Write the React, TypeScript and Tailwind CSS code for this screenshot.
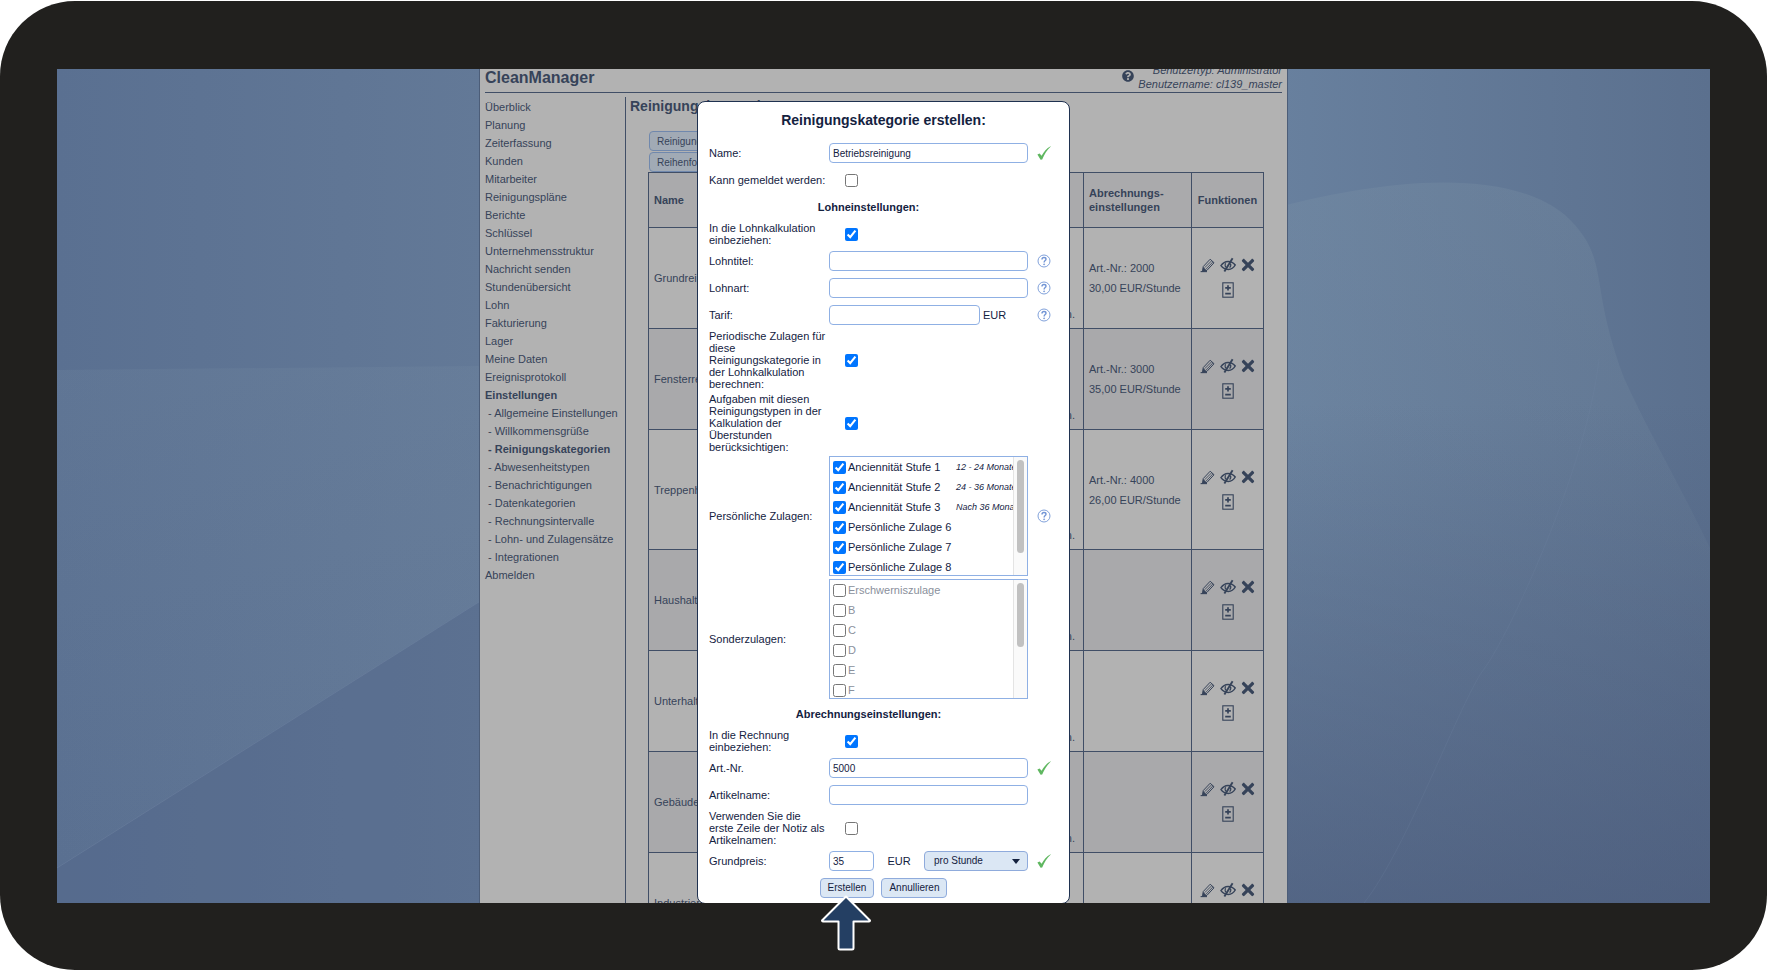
import React, { useState } from "react";
import { FaQuestionCircle, FaTimes } from "react-icons/fa";

const NAV_ITEMS = [
  "Überblick",
  "Planung",
  "Zeiterfassung",
  "Kunden",
  "Mitarbeiter",
  "Reinigungspläne",
  "Berichte",
  "Schlüssel",
  "Unternehmensstruktur",
  "Nachricht senden",
  "Stundenübersicht",
  "Lohn",
  "Fakturierung",
  "Lager",
  "Meine Daten",
  "Ereignisprotokoll",
];

const SETTINGS_ITEMS = [
  "Allgemeine Einstellungen",
  "Willkommensgrüße",
  "Reinigungskategorien",
  "Abwesenheitstypen",
  "Benachrichtigungen",
  "Datenkategorien",
  "Rechnungsintervalle",
  "Lohn- und Zulagensätze",
  "Integrationen",
];

interface Category {
  name: string;
  artNr?: string;
  price?: string;
  tall?: boolean;
}

const CATEGORIES: Category[] = [
  { name: "Grundreinigung", artNr: "2000", price: "30,00" },
  { name: "Fensterreinigung", artNr: "3000", price: "35,00" },
  { name: "Treppenhausreinigung", artNr: "4000", price: "26,00", tall: true },
  { name: "Haushaltsreinigung" },
  { name: "Unterhaltsreinigung" },
  { name: "Gebäudereinigung" },
  { name: "Industriereinigung" },
];

interface Allowance {
  name: string;
  note?: string;
}

const PERSONAL_ALLOWANCES: Allowance[] = [
  { name: "Anciennität Stufe 1", note: "12 - 24 Monate" },
  { name: "Anciennität Stufe 2", note: "24 - 36 Monate" },
  { name: "Anciennität Stufe 3", note: "Nach 36 Monaten" },
  { name: "Persönliche Zulage 6" },
  { name: "Persönliche Zulage 7" },
  { name: "Persönliche Zulage 8" },
];

const SPECIAL_ALLOWANCES: Allowance[] = [
  { name: "Erschwerniszulage" },
  { name: "B" },
  { name: "C" },
  { name: "D" },
  { name: "E" },
  { name: "F" },
];

/* Icons */

const PencilIcon = () => (
  <svg viewBox="0 0 16 16" className="h-4 w-4" fill="none" stroke="currentColor">
    <path d="M3.2 9.6 10.2 2.2 14 5.8 7 13.3 2.6 14.2Z" strokeWidth="1" />
    <path d="M4.8 10.6 11.6 3.8M6.2 12 13 4.8" strokeWidth="0.8" />
    <path d="M3.2 10 6.8 13.4 2.2 14.6Z" fill="currentColor" stroke="none" />
    <path d="M0.6 14.6H7" strokeWidth="1.1" />
  </svg>
);

const EyeSlashIcon = () => (
  <svg viewBox="0 0 16 16" className="h-4 w-4" fill="none" stroke="currentColor">
    <path d="M1 8.6C2.8 5.8 5.2 4.4 8 4.4S13.4 5.6 15.2 8C13.6 11 11 12.4 8.2 12.4S2.8 11.2 1 8.6Z" strokeWidth="1.5" />
    <path d="M5.6 6.2C4.8 8 5.2 9.8 6.6 10.6M10.4 6.4C11.2 8 10.6 9.6 9.6 10.6" strokeWidth="1.2" />
    <path d="M12.6 1.2 4.4 14.6" strokeWidth="1.9" />
  </svg>
);

const PlusMinusIcon = () => (
  <svg viewBox="0 0 12 16" className="h-4 w-3" fill="none" stroke="currentColor">
    <rect x="0.8" y="0.8" width="10.4" height="14.4" strokeWidth="1.1" />
    <path d="M6 3.2V8.4M3.2 5.8H8.8M3.2 11.6H8.8" strokeWidth="1.7" />
  </svg>
);

const CheckIcon = () => (
  <svg viewBox="0 0 14 14" className="h-3.5 w-3.5" fill="#5fb760">
    <path d="M0.4 8.4 2.6 7.4 4.6 9.8C6.8 5.8 9.6 2.4 13.6 0.2L13.8 0.6C10 4.2 7.4 8.2 5.2 13.6L3.6 13.8Z" />
  </svg>
);

const HintIcon = () => (
  <svg viewBox="0 0 14 14" className="h-3.5 w-3.5" fill="none" stroke="#7396d6">
    <circle cx="7" cy="7" r="6" strokeWidth="0.9" />
    <path d="M5 5.4C5 4.1 5.9 3.5 7 3.5S9 4.2 9 5.2C9 6.6 7.1 6.6 7.1 8.4" strokeWidth="1.4" />
    <circle cx="7.1" cy="10.3" r="0.5" strokeWidth="0.8" fill="#7396d6" />
  </svg>
);

const PointerArrow = () => (
  <svg viewBox="0 0 52 57" className="absolute bottom-5 left-1/2 z-20 -ml-16 h-[57px] w-[52px]">
    <path
      d="M26 2.5 50 26.5Q50 27.5 49 27.5H33.5V54Q33.5 55.5 32 55.5H20Q18.5 55.5 18.5 54V27.5H3Q2 27.5 2 26.5Z"
      fill="#243f63"
      stroke="#fff"
      strokeWidth="2"
      strokeLinejoin="round"
    />
  </svg>
);

const Wallpaper = () => (
  <svg viewBox="0 0 1653 834" preserveAspectRatio="none" className="absolute inset-0 h-full w-full">
    <defs>
      <linearGradient id="sky" x1="0" y1="0" x2="1" y2="0">
        <stop offset="0" stopColor="#5a7091" />
        <stop offset="0.26" stopColor="#637997" />
        <stop offset="0.74" stopColor="#68809e" />
        <stop offset="1" stopColor="#5b708e" />
      </linearGradient>
      <linearGradient id="dusk" x1="0" y1="0" x2="0" y2="1">
        <stop offset="0.4" stopColor="#4a5a7a" stopOpacity="0" />
        <stop offset="1" stopColor="#4a5a7a" stopOpacity="0.7" />
      </linearGradient>
      <linearGradient id="haze" x1="0" y1="0" x2="0" y2="1">
        <stop offset="0" stopColor="#8096a8" stopOpacity="0.25" />
        <stop offset="1" stopColor="#8096a8" stopOpacity="0" />
      </linearGradient>
      <linearGradient id="band" x1="0" y1="0" x2="0" y2="1">
        <stop offset="0" stopColor="#7d93a8" stopOpacity="0.16" />
        <stop offset="1" stopColor="#7d93a8" stopOpacity="0" />
      </linearGradient>
    </defs>
    <rect width="1653" height="834" fill="url(#sky)" />
    <path d="M0 301 422 297V533L0 799Z" fill="url(#band)" />
    <path d="M1200 144C1290 118 1440 90 1508 146C1555 190 1530 210 1567 309C1590 360 1625 420 1653 479V834H1200Z" fill="url(#haze)" />
    <rect x="826" width="827" height="834" fill="url(#dusk)" />
    <path d="M0 799 422 533V834H0Z" fill="#4f6186" fillOpacity="0.32" />
    <path d="M0 799 422 533" stroke="#7488a6" strokeOpacity="0.4" />
    <path d="M1542 290C1530 400 1450 570 1427 600S1350 780 1307 834" fill="none" stroke="#7488a6" strokeOpacity="0.2" />
  </svg>
);

/* Page behind the dialog */

const NavLink: React.FC<{ active?: boolean; children: React.ReactNode }> = ({ active = false, children }) => (
  <a href="#" className={active ? "block font-bold" : "block"}>
    {children}
  </a>
);

const Sidebar = () => (
  <nav className="w-[141px] shrink-0 border-r border-[#404e66] pt-px leading-[18px]">
    {NAV_ITEMS.map((item) => (
      <NavLink key={item}>{item}</NavLink>
    ))}
    <NavLink active>Einstellungen</NavLink>
    <div className="pl-[3px]">
      {SETTINGS_ITEMS.map((item) => (
        <NavLink key={item} active={item === "Reinigungskategorien"}>
          - {item}
        </NavLink>
      ))}
    </div>
    <NavLink>Abmelden</NavLink>
  </nav>
);

const cell = "border border-[#404e66]";

const CategoryTable = () => (
  <div className="px-[18px]">
    <table className="w-full table-fixed border-collapse text-left">
      <colgroup>
        <col />
        <col className="w-[120px]" />
        <col className="w-[108px]" />
        <col className="w-[72px]" />
      </colgroup>
      <thead>
        <tr className="h-[55px] bg-[#aaaaac] leading-3.5">
          <th className={`${cell} border-r-0 pl-[5px]`}>Name</th>
          <th className={`${cell} border-l-0`} />
          <th className={`${cell} pl-[5px]`}>
            Abrechnungs-
            <br />
            einstellungen
          </th>
          <th className={`${cell} text-center`}>Funktionen</th>
        </tr>
      </thead>
      <tbody className="leading-5">
        {CATEGORIES.map((category) => (
          <tr
            key={category.name}
            className={`${category.tall ? "h-[120px]" : "h-[101px]"} even:bg-[#a9a9ab]`}
          >
            <td className={`${cell} border-r-0 pl-[5px]`}>{category.name}</td>
            <td className={`${cell} border-l-0 pr-2 pb-1 text-right align-bottom`}>n.</td>
            <td className={`${cell} pl-[5px]`}>
              {category.artNr && (
                <>
                  <div>Art.-Nr.: {category.artNr}</div>
                  <div>{category.price} EUR/Stunde</div>
                </>
              )}
            </td>
            <td className={cell}>
              <div className="flex flex-col items-center gap-2 pb-0.5">
                <div className="flex items-center gap-1">
                  <button type="button" aria-label="Bearbeiten">
                    <PencilIcon />
                  </button>
                  <button type="button" aria-label="Ausblenden">
                    <EyeSlashIcon />
                  </button>
                  <button type="button" aria-label="Löschen">
                    <FaTimes className="h-[18px] w-4" />
                  </button>
                </div>
                <button type="button" aria-label="Zulagen">
                  <PlusMinusIcon />
                </button>
              </div>
            </td>
          </tr>
        ))}
      </tbody>
    </table>
  </div>
);

const AppPage = () => (
  <div className="relative mx-auto flex h-full w-[809px] flex-col border-x border-[#4c5d78] bg-[#b2b2b2] px-[5px] text-[11px] text-[#364359]">
    <header className="flex h-6 shrink-0 items-end justify-between border-b border-[#404e66]">
      <h1 className="text-base leading-7 font-bold">CleanManager</h1>
      <div className="flex items-end gap-1">
        <FaQuestionCircle className="mb-2.5 h-3 w-3" />
        <div className="pb-px text-right leading-3.5 italic">
          <div>Benutzertyp: Administrator</div>
          <div>Benutzername: cl139_master</div>
        </div>
      </div>
    </header>
    <div className="mt-1 flex min-h-0 flex-1">
      <Sidebar />
      <main className="min-w-0 flex-1 overflow-hidden pl-1">
        <h2 className="text-sm leading-[18px] font-bold">Reinigungskategorien</h2>
        <div className="mt-4 ml-[19px] flex flex-col items-start gap-px text-[10px]">
          <button type="button" className="h-5 rounded border border-[#7088ad] bg-[#a1aab5] px-[7px]">
            Reinigungskategorie
          </button>
          <button type="button" className="h-5 rounded border border-[#7088ad] bg-[#a1aab5] px-[7px]">
            Reihenfolge ändern
          </button>
        </div>
        <CategoryTable />
      </main>
    </div>
  </div>
);

/* Dialog */

const inputClass = "h-5 rounded border border-[#8fb0e4] bg-white pl-[3px] text-[10px] outline-none";
const buttonClass = "h-5 rounded border border-[#8fabdc] bg-[#dbe7f4] px-[7px] text-[10px]";

const Row: React.FC<{
  label: string;
  id?: string;
  status?: React.ReactNode;
  children: React.ReactNode;
}> = ({ label, id, status, children }) => (
  <div className="grid min-h-6 grid-cols-[120px_199px_1fr] items-center">
    <label htmlFor={id} className="pr-0.5">
      {label}
    </label>
    <div className="flex items-center">{children}</div>
    <div className="pl-[9px]">{status}</div>
  </div>
);

const CheckRow: React.FC<{ label: string; id: string; checked?: boolean }> = ({
  label,
  id,
  checked = false,
}) => (
  <Row label={label} id={id}>
    <input id={id} type="checkbox" defaultChecked={checked} className="ml-4 h-[13px] w-[13px]" />
  </Row>
);

const SectionTitle: React.FC<{ children: React.ReactNode }> = ({ children }) => (
  <h3 className="w-[319px] text-center leading-6 font-bold">{children}</h3>
);

const AllowanceList: React.FC<{
  label: string;
  items: Allowance[];
  checked?: boolean;
  thumb: string;
}> = ({ label, items, checked = false, thumb }) => (
  <div className="flex h-[120px] w-full border border-[#8fb0e4]">
    <ul aria-label={label} className="min-w-0 flex-1 overflow-hidden">
      {items.map((item) => (
        <li key={item.name} className="flex h-5 items-center pl-[3px]">
          <label className={checked ? "flex items-center gap-0.5" : "flex items-center gap-0.5 text-[#8a909c]"}>
            <input type="checkbox" defaultChecked={checked} className="h-[13px] w-[13px]" />
            <span className="w-[106px] whitespace-nowrap">{item.name}</span>
            {item.note && <span className="text-[9px] whitespace-nowrap italic">{item.note}</span>}
          </label>
        </li>
      ))}
    </ul>
    <div className="w-3.5 border-l border-[#e4e4e4] bg-[#fafafa] px-[3px] pt-[3px]">
      <div className={`${thumb} rounded-full bg-[#c1c1c1]`} />
    </div>
  </div>
);

const CategoryDialog = () => {
  const [name, setName] = useState("Betriebsreinigung");
  const [artNr, setArtNr] = useState("5000");
  const [price, setPrice] = useState("35");

  return (
    <div className="absolute inset-x-0 top-8 flex justify-center">
      <form
        role="dialog"
        aria-labelledby="dialog-title"
        className="w-[373px] rounded-lg border border-[#1f3150] bg-white px-[11px] pt-1.5 pb-[3px] text-[11px] leading-3 text-[#14223f]"
      >
        <h2 id="dialog-title" className="mb-[9px] text-center text-sm leading-6 font-bold">
          Reinigungskategorie erstellen:
        </h2>
        <div className="flex flex-col gap-[3px]">
          <Row label="Name:" id="name" status={<CheckIcon />}>
            <input id="name" value={name} onChange={(e) => setName(e.target.value)} className={`${inputClass} w-full`} />
          </Row>
          <CheckRow label="Kann gemeldet werden:" id="reportable" />

          <SectionTitle>Lohneinstellungen:</SectionTitle>
          <CheckRow label="In die Lohnkalkulation einbeziehen:" id="in-payroll" checked />
          <Row label="Lohntitel:" id="wage-title" status={<HintIcon />}>
            <input id="wage-title" className={`${inputClass} w-full`} />
          </Row>
          <Row label="Lohnart:" id="wage-type" status={<HintIcon />}>
            <input id="wage-type" className={`${inputClass} w-full`} />
          </Row>
          <Row label="Tarif:" id="rate" status={<HintIcon />}>
            <input id="rate" className={`${inputClass} mr-[3px] w-[151px]`} />
            EUR
          </Row>
          <CheckRow
            label="Periodische Zulagen für diese Reinigungskategorie in der Lohnkalkulation berechnen:"
            id="periodic"
            checked
          />
          <CheckRow
            label="Aufgaben mit diesen Reinigungstypen in der Kalkulation der Überstunden berücksichtigen:"
            id="overtime"
            checked
          />
          <Row label="Persönliche Zulagen:" status={<HintIcon />}>
            <AllowanceList label="Persönliche Zulagen" items={PERSONAL_ALLOWANCES} checked thumb="h-[93px]" />
          </Row>
          <Row label="Sonderzulagen:">
            <AllowanceList label="Sonderzulagen" items={SPECIAL_ALLOWANCES} thumb="h-16" />
          </Row>

          <SectionTitle>Abrechnungseinstellungen:</SectionTitle>
          <CheckRow label="In die Rechnung einbeziehen:" id="in-invoice" checked />
          <Row label="Art.-Nr." id="art-nr" status={<CheckIcon />}>
            <input id="art-nr" value={artNr} onChange={(e) => setArtNr(e.target.value)} className={`${inputClass} w-full`} />
          </Row>
          <Row label="Artikelname:" id="article-name">
            <input id="article-name" className={`${inputClass} w-full`} />
          </Row>
          <CheckRow label="Verwenden Sie die erste Zeile der Notiz als Artikelnamen:" id="note-name" />
          <Row label="Grundpreis:" id="price" status={<CheckIcon />}>
            <input id="price" value={price} onChange={(e) => setPrice(e.target.value)} className={`${inputClass} w-[45px]`} />
            <span className="flex-1 text-center">EUR</span>
            <div className="relative w-[104px]">
              <select
                aria-label="Einheit"
                className="h-5 w-full appearance-none rounded border border-[#8fabdc] bg-[#dbe7f4] pl-[9px] text-[10px]"
              >
                <option>pro Stunde</option>
              </select>
              <svg viewBox="0 0 8 5" className="pointer-events-none absolute top-2 right-2 h-[5px] w-2" fill="#14223f">
                <path d="M0 0H8L4 5Z" />
              </svg>
            </div>
          </Row>
          <div className="flex h-6 items-center justify-center gap-[7px]">
            <button type="submit" className={buttonClass}>
              Erstellen
            </button>
            <button type="button" className={buttonClass}>
              Annullieren
            </button>
          </div>
        </div>
      </form>
    </div>
  );
};

export default function App() {
  return (
    <div className="relative h-screen bg-white py-px font-['Liberation_Sans',Arial,sans-serif]">
      <div className="h-full rounded-[75px] bg-[#21201e] px-[57px] pt-17 pb-[67px]">
        <div className="relative h-full overflow-hidden">
          <Wallpaper />
          <AppPage />
          <CategoryDialog />
        </div>
      </div>
      <PointerArrow />
    </div>
  );
}
